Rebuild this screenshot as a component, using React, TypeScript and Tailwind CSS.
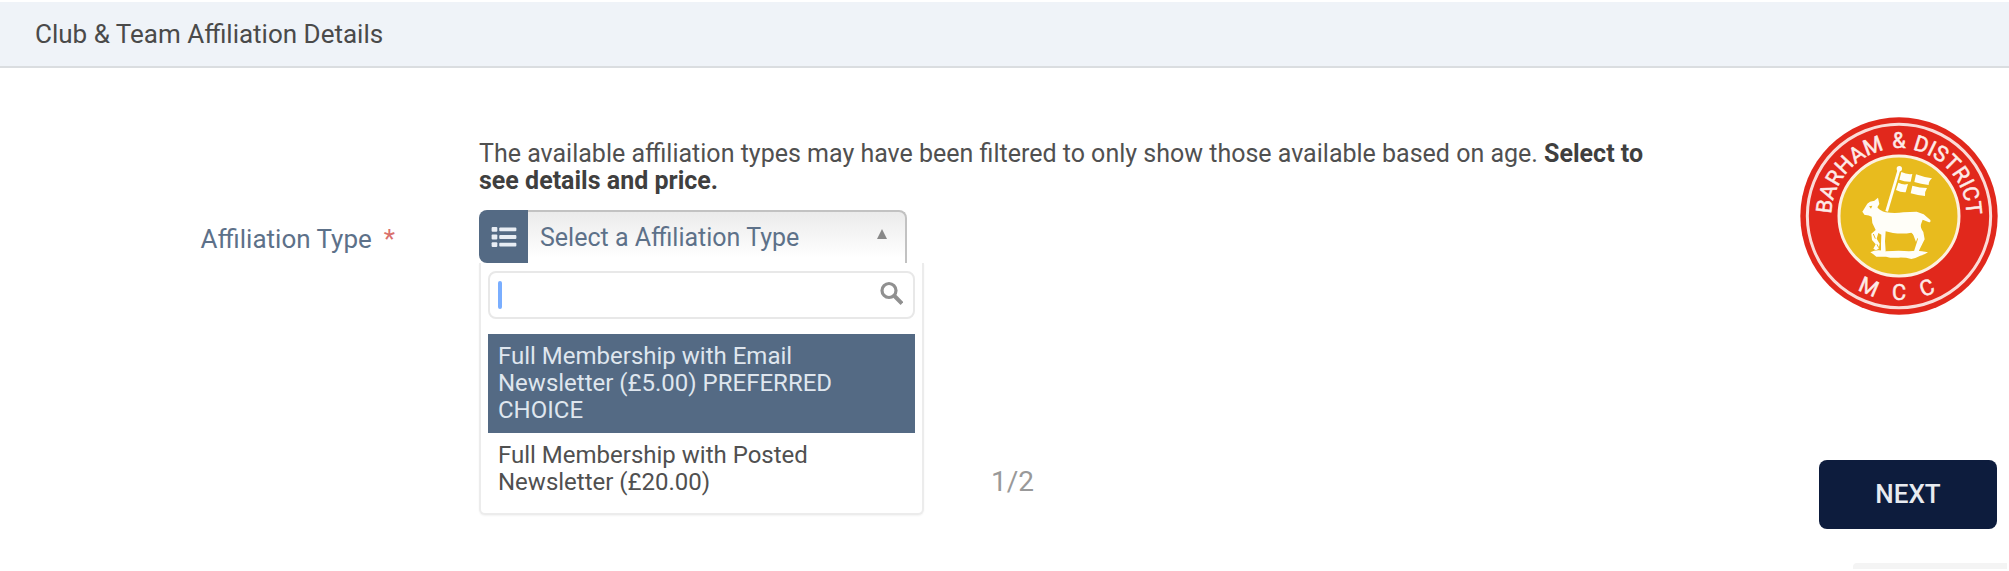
import { useState } from "react";

const options = [
  "Full Membership with Email Newsletter (£5.00) PREFERRED CHOICE",
  "Full Membership with Posted Newsletter (£20.00)",
];

function ClubLogo() {
  return (
    <svg
      viewBox="87 48 600 600"
      className="size-50 shrink-0"
      role="img"
      aria-label="Barham & District MCC"
    >
      <defs>
        <path id="arc-top" d="M184 348A203 203 0 0 1 590 348" />
        <path id="arc-bottom" d="M134 348A253 253 0 0 0 640 348" />
      </defs>
      <circle cx="387" cy="348" r="296" fill="#e1281c" />
      <circle cx="387" cy="348" r="275" fill="none" stroke="#fbdcd8" strokeWidth="9" />
      <circle cx="387" cy="348" r="180" fill="#e8bb1e" stroke="#fdf0e0" strokeWidth="9" />
      <g
        fill="#fdebe8"
        stroke="#fdebe8"
        strokeWidth="1.5"
        fontSize="65"
        textAnchor="middle"
        className="font-[Roboto,sans-serif]"
      >
        <text><textPath href="#arc-top" startOffset="22%">BARHAM</textPath></text>
        <text><textPath href="#arc-top" startOffset="50%">&amp;</textPath></text>
        <text><textPath href="#arc-top" startOffset="78%">DISTRICT</textPath></text>
        <text><textPath href="#arc-bottom" startOffset="37.2%">M</textPath></text>
        <text><textPath href="#arc-bottom" startOffset="50%">C</textPath></text>
        <text><textPath href="#arc-bottom" startOffset="61.8%">C</textPath></text>
      </g>
      <g fill="#fffef8">
        <circle cx="388" cy="206" r="8" />
        <path d="M383 208L391 210L354 335L346 333Z" />
        <path d="M394 216Q410 224 427 222L422 245Q405 246 388 239Z" />
        <path d="M438 223Q462 232 486 235Q476 243 476 255Q452 252 433 246Z" />
        <path d="M385 248Q400 256 414 252L407 277Q392 278 378 270Z" />
        <path d="M427 257Q450 264 471 264Q464 274 465 288Q444 286 422 280Z" />
        <path d="M277 335L292 311Q300 302 312 303L324 293L328 312L322 322Q330 333 347 337Q375 341 400 337L440 335L461 343L481 360Q483 367 477 367L458 359L453 373Q450 383 460 396L464 418L446 454L432 454L444 416L424 398Q400 403 369 399L347 394L345 424L347 454L333 454L333 430L334 404L325 399L320 416L329 431L326 446L318 451L310 446L317 433L306 420L304 401L317 390L307 369L305 350Q295 344 284 345Z" />
        <path d="M422 380L436 394L442 414L438 426L426 394Z" />
        <path d="M301 457Q319 447 347 454Q390 451 417 454Q445 449 474 457Q463 465 451 467Q438 474 424 477Q405 472 386 473Q364 475 348 470L319 470L309 462Z" />
      </g>
      <path d="M297 319L307 317L303 326Z" fill="#e8bb1e" />
      <path d="M310 402L316 416M321 433L326 443" fill="none" stroke="#e8bb1e" strokeWidth="3" />
    </svg>
  );
}

function ListIcon() {
  return (
    <svg viewBox="0 0 26 21" className="h-5 w-6.5" fill="#e8edf4" aria-hidden="true">
      <rect x="0" y="0" width="6" height="5" rx="1" />
      <rect x="8" y="0.5" width="18" height="4" rx="1" />
      <rect x="0" y="8" width="6" height="5" rx="1" />
      <rect x="8" y="8.5" width="18" height="4" rx="1" />
      <rect x="0" y="16" width="6" height="5" rx="1" />
      <rect x="8" y="16.5" width="18" height="4" rx="1" />
    </svg>
  );
}

export default function App() {
  const [active, setActive] = useState(0);
  const [open, setOpen] = useState(true);
  const [query, setQuery] = useState("");

  return (
    <div className="overflow-hidden bg-white pt-0.5 font-[Roboto,sans-serif] text-2xl text-[#505050]">
      <header className="border-b-2 border-[#dadde0] bg-[#eff3f8] px-[35px] pt-4 pb-4">
        <h1 className="text-[26px] leading-8 text-[#4a4a4a]">Club &amp; Team Affiliation Details</h1>
      </header>

      <main className="flex items-start pt-12 pr-2.5">
        <div className="flex w-[395px] shrink-0 justify-end pt-[107px] text-[26px] leading-8 text-[#5d7189]">
          <label htmlFor="affiliation" className="flex gap-3">
            Affiliation Type <span className="text-[#d9706c]">*</span>
          </label>
        </div>

        <div className="ml-[84px] min-w-0 flex-1 pt-6">
          <p className="max-w-[1180px] text-[25px] leading-[27px]">
            The available affiliation types may have been filtered to only show those available based
            on age. <strong className="font-bold text-[#3f3f3f]">Select to see details and price.</strong>
          </p>
          <div className="relative mt-4 w-[445px]">
            <button
              id="affiliation"
              type="button"
              aria-expanded={open}
              onClick={() => setOpen(!open)}
              className="flex h-[53px] w-[428px] items-stretch rounded-t-lg text-left text-[25px] text-[#5d7189]"
            >
              <span className="flex w-[49px] items-center justify-center rounded-l-lg bg-[#546a84]">
                <ListIcon />
              </span>
              <span className="flex flex-1 items-center justify-between rounded-tr-lg border-t-2 border-r-2 border-[#c2c2c2] bg-linear-to-b from-[#ebebeb] to-white to-90% pr-[18px] pl-3">
                Select a Affiliation Type
                <svg viewBox="0 0 10 10" className="mb-2 size-2.5" fill="#888" aria-hidden="true">
                  <path d="M5 0L10 10H0Z" />
                </svg>
              </span>
            </button>
            {open && (
              <div className="absolute top-full left-0 w-full rounded-b-md border-2 border-t-0 border-[#ececec] bg-white px-[7px] pt-2 pb-2 shadow-xs">
                <div className="flex h-12 items-center rounded-lg border-2 border-[#e8e8e8] pr-2.5 pl-2">
                  <span className="h-7 w-1 rounded-xs bg-[#7aaeff]" />
                  <input
                    aria-label="Search affiliation types"
                    value={query}
                    onChange={(e) => setQuery(e.target.value)}
                    className="min-w-0 flex-1 bg-transparent outline-none"
                  />
                  <svg viewBox="0 0 24 24" className="mb-1 size-6" fill="none" stroke="#909090" aria-hidden="true">
                    <circle cx="10" cy="9.5" r="7" strokeWidth="3.2" />
                    <path d="M15 14.5L23 22.5" strokeWidth="4" />
                  </svg>
                </div>
                <ul role="listbox" aria-label="Affiliation types" className="mt-[15px] leading-[27px]">
                  {options.map((name, i) => (
                    <li
                      key={name}
                      role="option"
                      aria-selected={i === active}
                      onMouseEnter={() => setActive(i)}
                      className={
                        i === active
                          ? "bg-[#546a84] py-[9px] pr-12 pl-2.5 text-[#dfe6ee]"
                          : "py-[9px] pr-12 pl-2.5 text-[#505050]"
                      }
                    >
                      {name}
                    </li>
                  ))}
                </ul>
              </div>
            )}
          </div>
        </div>

        <ClubLogo />
      </main>

      <footer className="mt-36 grid grid-cols-[1fr_auto_1fr] items-start pr-3 pl-7">
        <span className="col-start-2 pt-1.5 text-[28px] leading-8 text-[#999]">1/2</span>
        <button
          type="button"
          className="h-[69px] w-[178px] justify-self-end rounded-lg bg-[#0d1c3d] text-[26px] font-medium text-[#e8ebf0]"
        >
          NEXT
        </button>
      </footer>
      <div className="mt-[34px] mr-0.5 ml-auto h-1.5 w-[154px] rounded-tl bg-[#f4f4f4]" />
    </div>
  );
}
